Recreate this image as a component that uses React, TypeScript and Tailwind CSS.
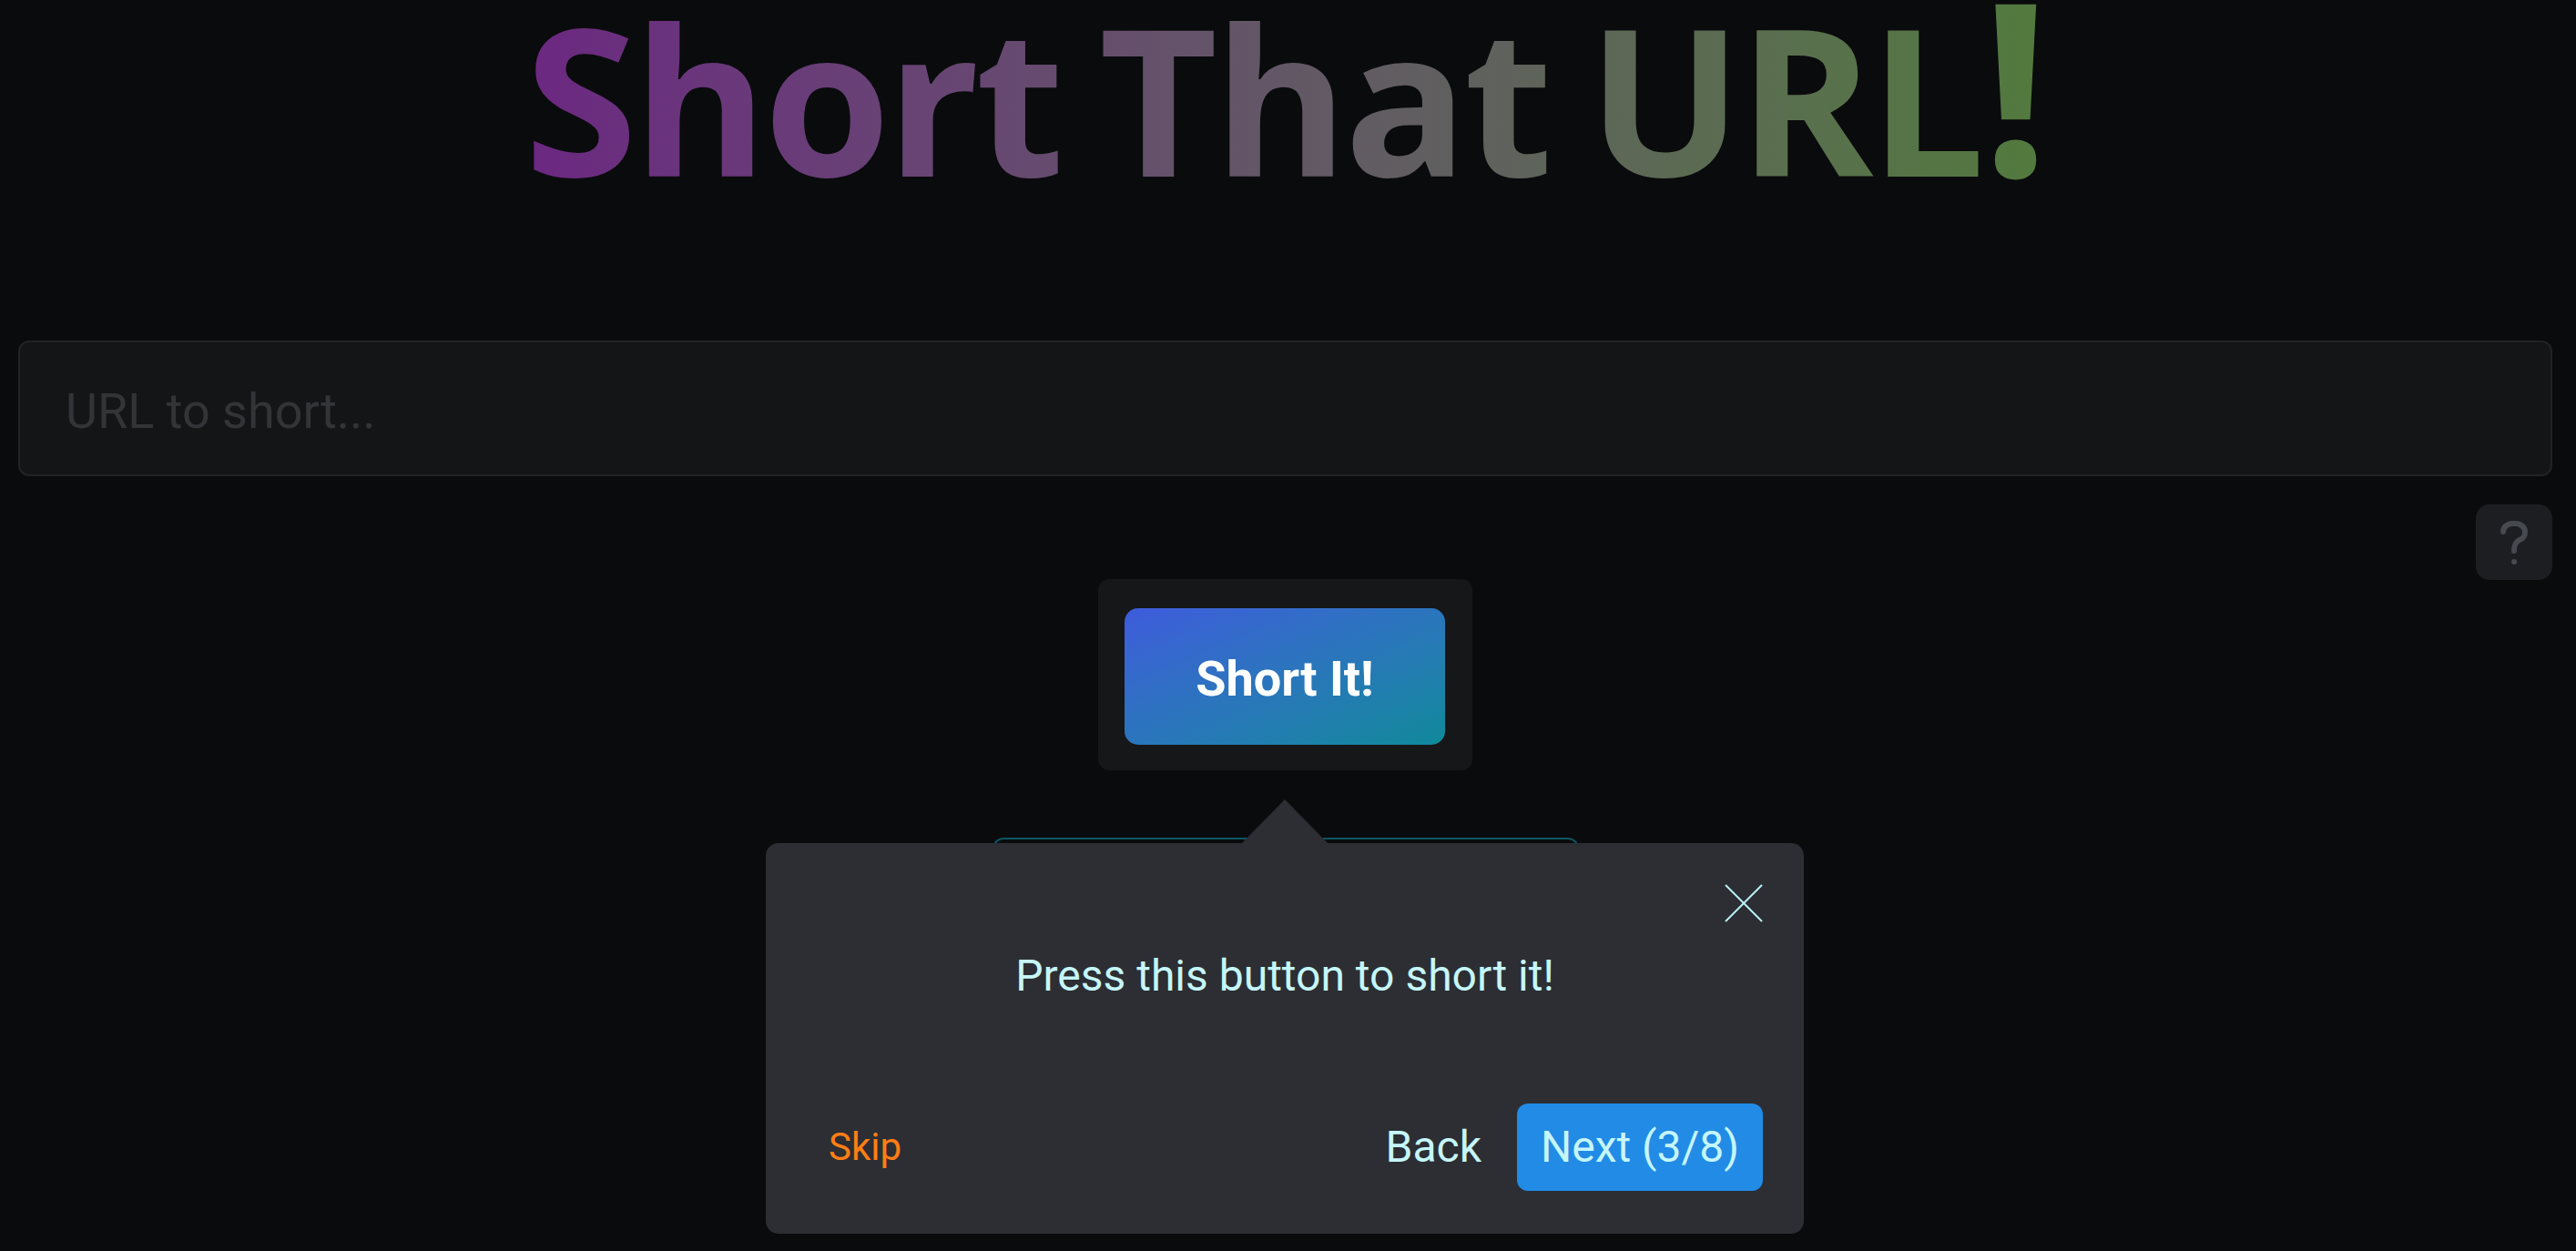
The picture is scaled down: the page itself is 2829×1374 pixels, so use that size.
import React from "react";

const QuestionMark = () => (
  <svg width="72" height="72" viewBox="0 0 24 24" fill="none" stroke="#46494e" strokeWidth="2" strokeLinecap="round" strokeLinejoin="round">
    <path d="M8 8a3.5 3 0 0 1 3.5 -3h1a3.5 3 0 0 1 3.5 3a3 3 0 0 1 -2 3a3 4 0 0 0 -2 4" />
    <path d="M12 19l0 .01" />
  </svg>
);

const CloseIcon = () => (
  <svg width="42" height="42" viewBox="0 0 42 42" fill="none" stroke="#b9f1f6" strokeWidth="2">
    <line x1="1" y1="1" x2="41" y2="41" />
    <line x1="41" y1="1" x2="1" y2="41" />
  </svg>
);

const TourTooltip = () => (
  <div className="absolute left-[841px] top-[926px] w-[1140px] rounded-[14px] bg-[#2c2e33] px-[45px] pt-[45px] pb-[47px] text-[#c5f6fa]">
    <svg className="absolute -top-[48px] left-1/2 -translate-x-1/2" width="96" height="49" viewBox="0 0 96 49">
      <polygon points="48,0 96,49 0,49" fill="#2c2e33" />
    </svg>
    <button className="absolute top-[45px] right-[45px]">
      <CloseIcon />
    </button>
    <div className="pt-[65px] pb-[59px] text-center text-[48px] leading-[72px]">
      Press this button to short it!
    </div>
    <div className="mt-[45px] flex items-center">
      <button className="px-[24px] py-[24px] text-[42px] leading-none text-[#fd7e14]">Skip</button>
      <div className="flex-1" />
      <button className="mr-[15px] px-[24px] py-[24px] text-[48px] leading-none">Back</button>
      <button className="rounded-[12px] bg-[#228be6] px-[26px] py-[24px] text-[48px] leading-none">
        Next (3/8)
      </button>
    </div>
  </div>
);

export default function App() {
  return (
    <div className="relative min-h-screen overflow-hidden bg-[#0a0b0d] pl-[20px] pr-[26px] font-['Roboto','Liberation_Sans',sans-serif]">
      <h1 className="text-center font-['Open_Sans','Liberation_Sans',sans-serif] text-[225px] font-bold leading-[215px] tracking-[-0.02em] [word-spacing:-0.05em]">
        <span className="inline-block bg-linear-to-r from-[#6b2781] to-[#527a3d] bg-clip-text text-transparent">
          Short That URL<span className="text-[265px] leading-[0]">!</span>
        </span>
      </h1>

      <input
        className="mt-[159px] block h-[149px] w-full rounded-[12px] border-2 border-[#222326] bg-[#141517] pt-[5px] pl-[50px] text-[54px] text-white outline-none placeholder:text-[#333438]"
        placeholder="URL to short..."
      />

      <div className="mt-[31px] flex justify-end">
        <button className="flex h-[83px] w-[84px] items-center justify-center rounded-[15px] bg-[#1c1e21]">
          <QuestionMark />
        </button>
      </div>

      <div className="-mt-[1px] flex justify-center">
        <div className="rounded-[12px] bg-[#161719] pt-[32px] pb-[28px] pl-[29px] pr-[30px]">
          <button className="h-[150px] w-[352px] rounded-[15px] bg-linear-to-br from-[#3e5bdc] to-[#0f899a] pt-[5px] text-[54px] font-bold text-white">
            Short It!
          </button>
        </div>
      </div>

      <div className="mt-[74px] flex justify-center">
        <div className="h-[300px] w-[644px] rounded-[12px] border-2 border-[#0e5561]" />
      </div>

      <TourTooltip />
    </div>
  );
}
